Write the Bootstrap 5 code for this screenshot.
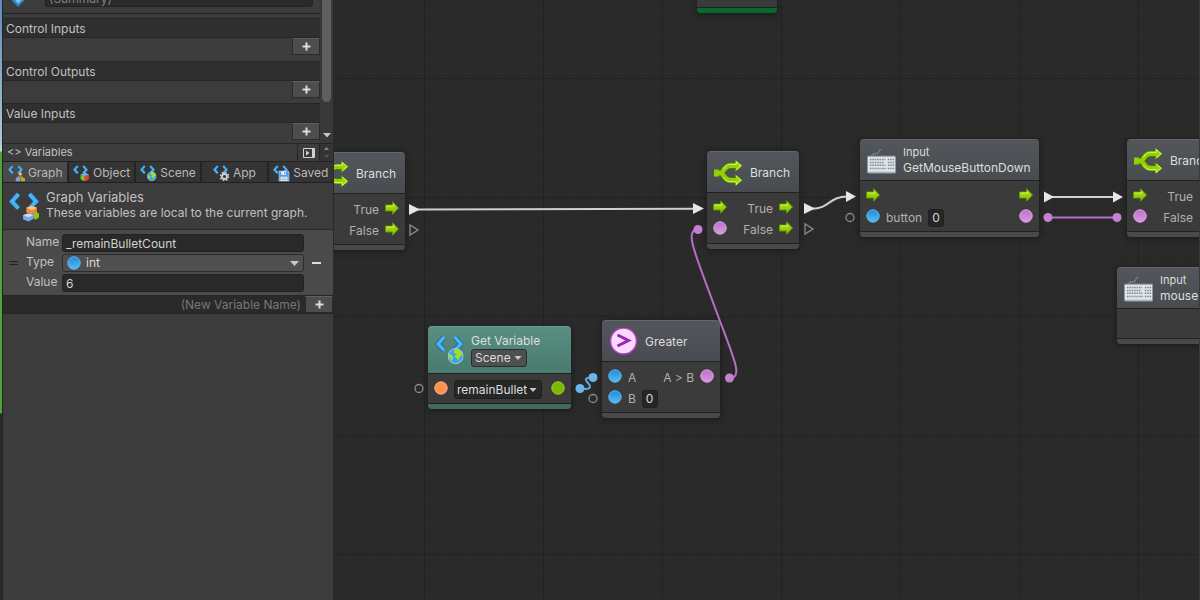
<!DOCTYPE html>
<html lang="en" data-bs-theme="dark">
<head>
<meta charset="utf-8">
<meta name="viewport" content="width=device-width, initial-scale=1">
<title>Script Graph</title>
<link href="https://cdn.jsdelivr.net/npm/bootstrap@5.3.0/dist/css/bootstrap.min.css" rel="stylesheet">
<script src="https://cdn.jsdelivr.net/npm/bootstrap@5.3.0/dist/js/bootstrap.bundle.min.js"></script>
<style>
  body { font: 12px/16px Inter, "Liberation Sans", sans-serif; color: #c0c0c0; background: #2a2a2a; }
  input, select, button { font: inherit; color: inherit; }
  button { border: 0; padding: 0; background: none; }
  svg { display: block; flex: none; }

  /* scene strip and side panel */
  .rail { width: 3px; border-right: 1px solid #232323; background: linear-gradient(#6388bd 0, #a9cbd2 144px, #c5dfd8 151px, #4ea637 152px, #4ea637 413px, #2a2a2a 414px); }
  .side { width: 331px; background: #3c3c3c; border-right: 1px solid #2a2a2a; }
  .inspector { height: 144px; border-bottom: 1px solid #262626; }
  .summary { height: 18px; margin: 0 7px 6px 20px; background: #2a2a2a; border: 1px solid #222; border-radius: 3px; color: #808080; padding: 0 3px; }
  .summary-row { height: 14px; border-bottom: 1px solid #232323; margin-bottom: 4px; align-items: flex-end; }
  .section-title { height: 20px; line-height: 19px; background: #2f2f2f; border: 1px solid #262626; border-width: 1px 0; padding-left: 3px; }
  .section-body { height: 22px; }
  .section + .section { margin-top: 1px; }
  .section:last-child { margin-top: 0; }
  .plus { width: 28px; height: 17px; background: #4d4d4d; border: 1px solid #2b2b2b; border-top-color: #606060; display: flex; align-items: center; justify-content: center; color: #dcdcdc; }
  .scroll { width: 13px; background: #393939; }
  .thumb { width: 9px; height: 102px; background: #5f5f5f; border-radius: 0 0 5px 5px; }
  .vars-bar { height: 18px; border-bottom: 1px solid #222; padding-left: 4px; line-height: 17px; font-size: 11px; }
  .dock { width: 22px; border-left: 1px solid #242424; }
  .spin { width: 14px; background: #343434; border-left: 1px solid #242424; }
  .tabs { height: 21px; border-bottom: 1px solid #202020; background: #343434; }
  .tabs button { flex: 1 1 0; padding-top: 2px; border-right: 2px solid #242424; color: #b8b8b8; gap: 3px; }
  .tabs button:last-child { border-right: 0; }
  .tabs button.on { background: #4a4a4a; }
  .about { height: 47px; border-bottom: 1px solid #2a2a2a; padding: 6px; gap: 7px; }
  .about h2 { font-size: 13px; line-height: 16px; margin: 0; font-weight: 400; color: inherit; }
  .entry { background: #4a4a4a; height: 65px; padding: 4px 0 3px 6px; }
  .grid-fields { display: grid; grid-template-columns: 36px 1fr; row-gap: 2px; }
  .field { height: 18px; min-width: 0; width: 100%; background: #292929; border: 1px solid #222; border-radius: 3px; padding: 0 3px; color: #d2d2d2; }
  .drop { appearance: none; background: #4f4f4f url("data:image/svg+xml,%3Csvg xmlns='http://www.w3.org/2000/svg' width='9' height='5' viewBox='0 0 18 10'%3E%3Cpath d='M0 0h18L9 10z' fill='%23c8c8c8'/%3E%3C/svg%3E") no-repeat right 4px center; border: 1px solid #2c2c2c; border-radius: 3px; color: #dcdcdc; }
  .type-drop { height: 18px; width: 100%; padding: 0 14px 0 23px; }
  .type-dot { position: absolute; left: 5px; top: 2px; }
  .grip { width: 9px; height: 4px; border: 1px solid #222; border-width: 1px 0; }
  .new-row { border: 1px solid #262626; border-width: 1px 0; }
  .new-name { height: 17px; border: 0; background: #2a2a2a; text-align: right; padding: 0 4px; color: #777; min-width: 0; }
  .new-name::placeholder { color: #777; opacity: 1; }

  /* graph canvas */
  .stage { border-right: 1px solid #3a3a3a; }
  .backdrop { position: absolute; inset: 0; width: 100%; height: 100%; }
  .unit { position: absolute; border-radius: 4px; background: #3b3b3b; box-shadow: 0 1px 5px 1px #1d1d1d; overflow: hidden; }
  .unit-head { height: 42px; padding: 1px 7px 0; gap: 7px; background: linear-gradient(#53565a, #484b4f); border-top: 1px solid #63666a; border-bottom: 1px solid #212121; color: #dedede; line-height: 16px; }
  .unit-head.teal { height: 48px; padding-top: 0; background: linear-gradient(#598f82, #497a6f); border-top-color: #67a092; }
  .unit-sub { font-size: 11px; line-height: 15px; }
  .unit-body { padding: 5px 6px 3px; }
  .line { height: 21px; gap: 6px; color: #b0b0b0; }
  .line svg { margin-bottom: 3px; }
  .unit-foot { height: 6px; background: #48494d; border-top: 1px solid #212121; }
  .unit-foot.teal { background: #41695f; }
  .unit-foot.green { background: #076a2c; }
  .num { width: 16px; height: 18px; padding: 0 3px; background: #262626; border: 1px solid #202020; border-radius: 3px; color: #d8d8d8; }
  .scene-drop { width: 56px; height: 18px; padding: 0 3px; background-size: 8px 4px; }
  .combo { width: 88px; height: 19px; padding: 0 2px; background-color: #272727; background-size: 8px 4px; border-color: #1f1f1f; }
</style>
</head>
<body class="vh-100 overflow-hidden d-flex">

<svg width="0" height="0" class="position-absolute" aria-hidden="true">
  <defs>
    <linearGradient id="lime" x2="0" y2="1"><stop stop-color="#b6e51b"/><stop offset="1" stop-color="#84c000"/></linearGradient>
    <linearGradient id="sky" x2="0" y2="1"><stop stop-color="#1d8bdc"/><stop offset="1" stop-color="#5cbcf5"/></linearGradient>
    <linearGradient id="plum" x2="0" y2="1"><stop stop-color="#bd70c9"/><stop offset="1" stop-color="#dc98e4"/></linearGradient>
    <symbol id="i-plus" viewBox="0 0 9 9"><path d="M4.500 .5v8M.5 4.500h8" stroke="currentColor" stroke-width="2"/></symbol>
    <symbol id="i-flow" viewBox="0 0 14 14"><path d="M.5 4h7V.8L13.500 7l-6 6.200V10h-7z" fill="url(#lime)" stroke="#5f9a00" stroke-width="1"/><path d="M1.500 5h7V3.500" fill="none" stroke="#dcff63" stroke-width=".8"/></symbol>
    <symbol id="i-sky" viewBox="0 0 14 14"><circle cx="7" cy="7" r="6.200" fill="url(#sky)" stroke="#62b9f0" stroke-width="1"/></symbol>
    <symbol id="i-plum" viewBox="0 0 14 14"><circle cx="7" cy="7" r="6.200" fill="url(#plum)" stroke="#e6a5ee" stroke-width="1"/></symbol>
    <symbol id="i-orange" viewBox="0 0 14 14"><circle cx="7" cy="7" r="6.200" fill="#ff914d" stroke="#ffb184" stroke-width="1"/></symbol>
    <symbol id="i-green" viewBox="0 0 14 14"><circle cx="7" cy="7" r="6.200" fill="#79b900" stroke="#a3d52e" stroke-width="1"/></symbol>
    <symbol id="i-branch" viewBox="0 0 30 28">
      <path d="M0 14h7C10 14 10 6.500 17 6.500h6M7 14c3 0 3 7.500 10 7.500h6" fill="none" stroke="#4f8200" stroke-width="6"/>
      <path d="M22 .6 29.600 6.500 22 12.400zM22 15.600l7.600 5.900-7.600 5.900z" fill="#9ad600" stroke="#4f8200" stroke-width="1"/>
      <path d="M0 14h7C10 14 10 6.500 17 6.500h6M7 14c3 0 3 7.500 10 7.500h6" fill="none" stroke="#93d000" stroke-width="4.500"/>
      <path d="M0 10.500h5v7H0z" fill="#93d000"/>
      <path d="M10 10c2-4 4-5 7-5h6V2l5 4.500-5 4.500M10 18.500c2 3 4 4.500 7 4.500h6v3l5-4.500-5-4.500" fill="none" stroke="#dcf58a" stroke-width="1"/>
    </symbol>
    <symbol id="i-keys" viewBox="0 0 30 28">
      <path d="M5 9c1-5 4-1 6-3s1-4 4-4" fill="none" stroke="#71818b" stroke-width="1.400"/>
      <rect x=".5" y="9" width="29" height="17.500" rx="1" fill="#dfe5e9" stroke="#8d9aa3"/>
      <path d="M1 25h28v1.500H1z" fill="#a3b0b8"/>
      <path d="M3 12.500h16M3 15.500h15M3 18.500h16" stroke="#7d8a93" stroke-width="1.600" stroke-dasharray="1.600 .9"/>
      <path d="M21.500 12.500H28M21.500 15.500H28M21.500 18.500H28M21.500 21.800H28" stroke="#7d8a93" stroke-width="1.600" stroke-dasharray="1.600 .9"/>
      <path d="M3 21.800h3M16 21.800h3.500" stroke="#7d8a93" stroke-width="1.600" stroke-dasharray="1.400 .6"/><path d="M6.500 21.800h9" stroke="#a5b0b8" stroke-width="1.500"/>
    </symbol>
    <symbol id="i-angles" viewBox="0 0 30 30"><path d="M9.500 2 3 9.500l6.500 7M20.500 2 27 9.500l-6.500 7" fill="none" stroke="#1d5f93" stroke-width="5.500"/><path d="M9.500 2 3 9.500l6.500 7M20.500 2 27 9.500l-6.500 7" fill="none" stroke="#4db2f2" stroke-width="3.800"/></symbol>
    <symbol id="i-globe" viewBox="0 0 16 16"><circle cx="8" cy="8" r="7.500" fill="#3ba0ea" stroke="#bfe2fb" stroke-width=".8"/><path d="M7 1c4-1 8 3 7.500 6L12 9l-1 4-2-3-2-1 2-3-3-1zM1.500 6l3 1 1 3-1 3C2 11 1 8 1.500 6z" fill="#a6de25"/></symbol>
    <symbol id="i-cubes" viewBox="0 0 16 16"><path d="M10 8l3-2 3 2v4l-4 2z" fill="#8dc21f"/><path d="M4 2.500 9 1l5 1.500v4L9 9 4 7z" fill="#f08b35"/><path d="M4 2.500 9 1l5 1.500L9 5z" fill="#ffc388"/><path d="M1 9.500 6 8l5 1.500V13l-5 2.500-5-2z" fill="#77a9ea"/><path d="M1 9.500 6 8l5 1.500-5 2z" fill="#c6e0ff"/></symbol>
    <symbol id="i-people" viewBox="0 0 16 16"><circle cx="8" cy="3.500" r="3" fill="#ffae5c"/><path d="M4 7h8v4H4z" fill="#e07a27"/><path d="M0 11l4-3 4 3v5H0z" fill="#70a7ea"/><path d="M9 11l3-2 4 2v5H9z" fill="#a2b92a"/></symbol>
    <symbol id="i-cube" viewBox="0 0 16 16"><path d="M1 4l7-3 7 3-7 3z" fill="#6ab1ff"/><path d="M1 4l7 3v9l-7-4z" fill="#81bd31"/><path d="M8 7l7-3v8l-7 4z" fill="#e5422b"/></symbol>
    <symbol id="i-gear" viewBox="0 0 16 16"><circle cx="8" cy="8" r="4" fill="none" stroke="#c9ced2" stroke-width="3"/><circle cx="8" cy="8" r="6.500" fill="none" stroke="#c9ced2" stroke-width="2.600" stroke-dasharray="2.550 2.550"/></symbol>
    <symbol id="i-disk" viewBox="0 0 16 16"><path d="M.5.5h13l2 2v13H.5z" fill="#4f9fe6" stroke="#d8ecff"/><path d="M4 1h7v5H4zM3 9h10v6H3z" fill="#f0f6fb"/><path d="M4 11h8M4 13h8" stroke="#85a6c0"/><path d="M8.500 2h1.500v3H8.500z" fill="#347fc0"/></symbol>
  </defs>
</svg>

<div class="rail flex-shrink-0"></div>

<aside class="side flex-shrink-0 d-flex flex-column">
  <div class="inspector d-flex overflow-hidden">
    <div class="flex-grow-1">
      <div class="summary-row d-flex overflow-hidden">
        <svg class="ms-2" width="14" height="20" viewBox="0 0 14 20"><path d="M1 0h12v8L7 14 1 8z" fill="#2c7fb8"/><path d="M4 0h7v7l-4 4-3-4z" fill="#6cc4f7"/></svg>
        <input class="summary flex-grow-1" aria-label="Summary" value="(Summary)">
      </div>
      <div class="section">
        <div class="section-title">Control Inputs</div>
        <div class="section-body d-flex justify-content-end"><button class="plus" aria-label="Add control input"><svg width="9" height="9"><use href="#i-plus"/></svg></button></div>
      </div>
      <div class="section">
        <div class="section-title">Control Outputs</div>
        <div class="section-body d-flex justify-content-end"><button class="plus" aria-label="Add control output"><svg width="9" height="9"><use href="#i-plus"/></svg></button></div>
      </div>
      <div class="section">
        <div class="section-title">Value Inputs</div>
        <div class="section-body d-flex justify-content-end"><button class="plus" aria-label="Add value input"><svg width="9" height="9"><use href="#i-plus"/></svg></button></div>
      </div>
    </div>
    <div class="scroll d-flex flex-column align-items-center justify-content-between pb-1">
      <div class="thumb"></div>
      <svg width="8" height="8" viewBox="0 0 8 8"><path d="M0 2h8L4 6.500z" fill="#c8c8c8"/></svg>
    </div>
  </div>

  <div class="vars-bar d-flex">
    <span class="flex-grow-1">&lt;&gt; Variables</span>
    <button class="dock d-flex align-items-center justify-content-center" aria-label="Dock"><svg width="12" height="10" viewBox="0 0 12 10"><path d="M.5.5h11v9H.5z" fill="none" stroke="#d0d0d0"/><path d="M9 1h2v8H9zM3 2.500 6.500 5 3 7.500z" fill="#d0d0d0"/></svg></button>
    <div class="spin d-flex flex-column align-items-center justify-content-around"><svg width="5" height="3" viewBox="0 0 5 3"><path d="M0 3h5L2.500 0z" fill="#888"/></svg><svg width="5" height="3" viewBox="0 0 5 3"><path d="M0 0h5L2.500 3z" fill="#555"/></svg></div>
  </div>

  <div class="tabs d-flex">
    <button class="on d-flex align-items-center justify-content-center"><svg width="17" height="17" viewBox="0 0 34 34"><use href="#i-angles" width="30" height="30"/><use href="#i-people" x="15" y="14" width="19" height="19"/></svg>Graph</button>
    <button class="d-flex align-items-center justify-content-center"><svg width="17" height="17" viewBox="0 0 34 34"><use href="#i-angles" width="30" height="30"/><use href="#i-cube" x="14" y="14" width="19" height="19"/></svg>Object</button>
    <button class="d-flex align-items-center justify-content-center"><svg width="17" height="17" viewBox="0 0 34 34"><use href="#i-angles" width="30" height="30"/><use href="#i-globe" x="14" y="13" width="19" height="19"/></svg>Scene</button>
    <button class="d-flex align-items-center justify-content-center"><svg width="17" height="17" viewBox="0 0 34 34"><use href="#i-angles" width="30" height="30"/><use href="#i-gear" x="13" y="13" width="20" height="20"/></svg>App</button>
    <button class="d-flex align-items-center justify-content-center"><svg width="17" height="17" viewBox="0 0 34 34"><use href="#i-angles" width="30" height="30"/><use href="#i-disk" x="11" y="11" width="22" height="22"/></svg>Saved</button>
  </div>

  <div class="about d-flex">
    <svg width="30" height="34" viewBox="0 0 30 34"><use href="#i-angles" y="3" width="30" height="30"/><use href="#i-cubes" x="13" y="16" width="17" height="17"/></svg>
    <div><h2>Graph Variables</h2><div>These variables are local to the current graph.</div></div>
  </div>

  <div class="entry d-flex align-items-center">
    <div class="grip me-2"></div>
    <div class="grid-fields flex-grow-1">
      <label for="vname">Name</label><input id="vname" class="field" value="_remainBulletCount">
      <label for="vtype">Type</label>
      <div class="position-relative">
        <select id="vtype" class="drop type-drop d-block"><option>int</option></select>
        <svg class="type-dot" width="14" height="14"><use href="#i-sky"/></svg>
      </div>
      <label for="vvalue">Value</label><input id="vvalue" class="field" value="6">
    </div>
    <button class="px-1 ms-1 me-2" aria-label="Remove variable"><svg width="9" height="2"><path d="M0 1h9" stroke="#dcdcdc" stroke-width="2"/></svg></button>
  </div>
  <div class="new-row d-flex">
    <input class="new-name flex-grow-1" aria-label="New variable name" placeholder="(New Variable Name)">
    <button class="plus" aria-label="Add variable"><svg width="9" height="9"><use href="#i-plus"/></svg></button>
  </div>
</aside>

<main class="stage position-relative flex-grow-1 overflow-hidden">
  <svg class="backdrop">
    <defs>
      <pattern id="cells" x="90" y="78" width="119" height="119" patternUnits="userSpaceOnUse">
        <path d="M12.500 0v119M24.500 0v119M36.500 0v119M48.500 0v119M60.500 0v119M71.500 0v119M83.500 0v119M95.500 0v119M107.500 0v119M0 12.500h119M0 24.500h119M0 36.500h119M0 48.500h119M0 60.500h119M0 71.500h119M0 83.500h119M0 95.500h119M0 107.500h119" stroke="#272727"/>
        <path d="M.5 0v119M0 .5h119" stroke="#222"/>
      </pattern>
    </defs>
    <rect width="100%" height="100%" fill="url(#cells)"/>
  </svg>

  <section class="unit" style="left:363px;top:-41px;width:80px">
    <div style="height:48px"></div><div class="unit-foot green"></div>
  </section>

  <section class="unit" style="left:-21px;top:152px;width:92px">
    <div class="unit-head d-flex align-items-center"><svg width="29" height="28"><use href="#i-branch"/></svg>Branch</div>
    <div class="unit-body">
      <div class="line d-flex align-items-center"><svg width="14" height="14"><use href="#i-flow"/></svg><span class="ms-auto">True</span><svg width="14" height="14"><use href="#i-flow"/></svg></div>
      <div class="line d-flex align-items-center"><svg width="14" height="14"><use href="#i-plum"/></svg><span class="ms-auto">False</span><svg width="14" height="14"><use href="#i-flow"/></svg></div>
    </div>
    <div class="unit-foot"></div>
  </section>

  <section class="unit" style="left:373px;top:151px;width:92px">
    <div class="unit-head d-flex align-items-center"><svg width="29" height="28"><use href="#i-branch"/></svg>Branch</div>
    <div class="unit-body">
      <div class="line d-flex align-items-center"><svg width="14" height="14"><use href="#i-flow"/></svg><span class="ms-auto">True</span><svg width="14" height="14"><use href="#i-flow"/></svg></div>
      <div class="line d-flex align-items-center"><svg width="14" height="14"><use href="#i-plum"/></svg><span class="ms-auto">False</span><svg width="14" height="14"><use href="#i-flow"/></svg></div>
    </div>
    <div class="unit-foot"></div>
  </section>

  <section class="unit" style="left:526px;top:139px;width:179px">
    <div class="unit-head d-flex align-items-center"><svg width="29" height="28"><use href="#i-keys"/></svg><div><div class="unit-sub">Input</div>GetMouseButtonDown</div></div>
    <div class="unit-body">
      <div class="line d-flex align-items-center"><svg width="14" height="14"><use href="#i-flow"/></svg><svg class="ms-auto" width="14" height="14"><use href="#i-flow"/></svg></div>
      <div class="line d-flex align-items-center"><svg width="14" height="14"><use href="#i-sky"/></svg><label for="btn">button</label><input id="btn" class="num" value="0"><svg class="ms-auto" width="14" height="14"><use href="#i-plum"/></svg></div>
    </div>
    <div class="unit-foot"></div>
  </section>

  <section class="unit" style="left:793px;top:139px;width:92px">
    <div class="unit-head d-flex align-items-center"><svg width="29" height="28"><use href="#i-branch"/></svg>Branch</div>
    <div class="unit-body">
      <div class="line d-flex align-items-center"><svg width="14" height="14"><use href="#i-flow"/></svg><span class="ms-auto">True</span><svg width="14" height="14"><use href="#i-flow"/></svg></div>
      <div class="line d-flex align-items-center"><svg width="14" height="14"><use href="#i-plum"/></svg><span class="ms-auto">False</span><svg width="14" height="14"><use href="#i-flow"/></svg></div>
    </div>
    <div class="unit-foot"></div>
  </section>

  <section class="unit" style="left:783px;top:267px;width:140px">
    <div class="unit-head d-flex align-items-center"><svg width="29" height="28"><use href="#i-keys"/></svg><div><div class="unit-sub">Input</div>mousePosition</div></div>
    <div class="unit-body"><div class="line"></div></div>
    <div class="unit-foot"></div>
  </section>

  <section class="unit" style="left:94px;top:326px;width:143px">
    <div class="unit-head teal d-flex align-items-center"><svg width="29" height="32" viewBox="0 0 30 34"><use href="#i-angles" y="1" width="30" height="30"/><use href="#i-globe" x="13" y="15" width="17" height="17"/></svg><div><label for="scope" class="d-block">Get Variable</label><select id="scope" class="drop scene-drop d-block"><option>Scene</option></select></div></div>
    <div class="unit-body">
      <div class="line d-flex align-items-center"><svg width="14" height="14"><use href="#i-orange"/></svg><select class="drop combo" aria-label="Variable name"><option>remainBullet</option></select><svg class="ms-auto" width="14" height="14"><use href="#i-green"/></svg></div>
    </div>
    <div class="unit-foot teal"></div>
  </section>

  <section class="unit" style="left:268px;top:320px;width:118px">
    <div class="unit-head d-flex align-items-center"><svg width="29" height="28" viewBox="0 0 28 28"><circle cx="14" cy="13" r="13" fill="#fbd9ff" stroke="#b23fc4" stroke-width="1.500"/><path d="M8 7l11 5.500L8 18" fill="none" stroke="#9a27b3" stroke-width="3"/></svg>Greater</div>
    <div class="unit-body">
      <div class="line d-flex align-items-center"><svg width="14" height="14"><use href="#i-sky"/></svg><span>A</span><span class="ms-auto">A &gt; B</span><svg width="14" height="14"><use href="#i-plum"/></svg></div>
      <div class="line d-flex align-items-center"><svg width="14" height="14"><use href="#i-sky"/></svg><label for="bval">B</label><input id="bval" class="num" value="0"></div>
    </div>
    <div class="unit-foot"></div>
  </section>

  <svg class="backdrop pe-none" fill="none" stroke-width="2">
    <g stroke="#d0d0d0"><path d="M84 209.500 362 208.700M478 208.700C496 208.700 494 196.500 514 196.500M718 197h63"/></g>
    <g fill="#e6e6e6"><path d="M75 204v11l11-5.500zM359 203v11l11-5.500zM470 203v11l11-5.500zM512 191v11l10-5.500zM710 191.500v11l10-5.500zM779 191.500v11l10-5.500z"/></g>
    <g stroke="#8c8c8c" stroke-width="1.300"><path d="M76 225v10l8-5zM471 224v10l8-5z"/><circle cx="516" cy="217.500" r="4"/><circle cx="85" cy="388.500" r="4"/><circle cx="259" cy="398.500" r="4"/></g>
    <g stroke="#b370c2"><path d="M714 217.500h69M364 229.500C350 230 361 253 380 305S410 377 396 378"/></g>
    <g fill="#c57fd3"><circle cx="714" cy="217.500" r="4.500"/><circle cx="783" cy="217.500" r="4.500"/><circle cx="364" cy="229.500" r="4.500"/><circle cx="395.500" cy="378" r="4.500"/></g>
    <path d="M246 388c12 3 11-2 8-5s-4-6 5-5.500" stroke="#5fa9dc"/>
    <g fill="#6bb5e8"><circle cx="246" cy="388.500" r="4.500"/><circle cx="259" cy="377.500" r="4.500"/></g>
  </svg>
</main>
</body>
</html>
